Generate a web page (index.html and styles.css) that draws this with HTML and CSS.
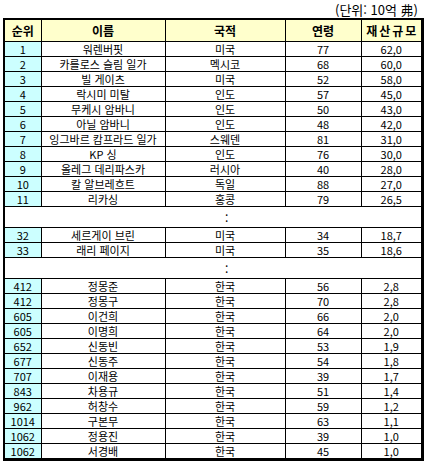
FILE: index.html
```html
<!DOCTYPE html>
<html lang="ko">
<head>
<meta charset="utf-8">
<link rel="stylesheet" href="styles.css">
</head>
<body>
<div class="unit">(단위: 10억 弗)</div>
<div class="frame">
<table class="rich">
<colgroup>
<col class="c1"><col class="c2"><col class="c3"><col class="c4"><col class="c5">
</colgroup>
<thead>
<tr class="head"><th>순위</th><th>이름</th><th>국적</th><th>연령</th><th class="wide">재산규모</th></tr>
</thead>
<tbody>
<tr class="row"><td class="rank">1</td><td>워렌버핏</td><td>미국</td><td>77</td><td>62,0</td></tr>
<tr class="row"><td class="rank">2</td><td>카를로스 슬림 일가</td><td>멕시코</td><td>68</td><td>60,0</td></tr>
<tr class="row"><td class="rank">3</td><td>빌 게이츠</td><td>미국</td><td>52</td><td>58,0</td></tr>
<tr class="row"><td class="rank">4</td><td>락시미 미탈</td><td>인도</td><td>57</td><td>45,0</td></tr>
<tr class="row"><td class="rank">5</td><td>무케시 암바니</td><td>인도</td><td>50</td><td>43,0</td></tr>
<tr class="row"><td class="rank">6</td><td>아닐 암바니</td><td>인도</td><td>48</td><td>42,0</td></tr>
<tr class="row"><td class="rank">7</td><td>잉그바르 캄프라드 일가</td><td>스웨덴</td><td>81</td><td>31,0</td></tr>
<tr class="row"><td class="rank">8</td><td>KP 싱</td><td>인도</td><td>76</td><td>30,0</td></tr>
<tr class="row"><td class="rank">9</td><td>올레그 데리파스카</td><td>러시아</td><td>40</td><td>28,0</td></tr>
<tr class="row"><td class="rank">10</td><td>칼 알브레흐트</td><td>독일</td><td>88</td><td>27,0</td></tr>
<tr class="row"><td class="rank">11</td><td>리카싱</td><td>홍콩</td><td>79</td><td>26,5</td></tr>
<tr class="gap"><td colspan="5">:</td></tr>
<tr class="row"><td class="rank">32</td><td>세르게이 브린</td><td>미국</td><td>34</td><td>18,7</td></tr>
<tr class="row"><td class="rank">33</td><td>래리 페이지</td><td>미국</td><td>35</td><td>18,6</td></tr>
<tr class="gap"><td colspan="5">:</td></tr>
<tr class="row"><td class="rank">412</td><td>정몽준</td><td>한국</td><td>56</td><td>2,8</td></tr>
<tr class="row"><td class="rank">412</td><td>정몽구</td><td>한국</td><td>70</td><td>2,8</td></tr>
<tr class="row"><td class="rank">605</td><td>이건희</td><td>한국</td><td>66</td><td>2,0</td></tr>
<tr class="row"><td class="rank">605</td><td>이명희</td><td>한국</td><td>64</td><td>2,0</td></tr>
<tr class="row"><td class="rank">652</td><td>신동빈</td><td>한국</td><td>53</td><td>1,9</td></tr>
<tr class="row"><td class="rank">677</td><td>신동주</td><td>한국</td><td>54</td><td>1,8</td></tr>
<tr class="row"><td class="rank">707</td><td>이재용</td><td>한국</td><td>39</td><td>1,7</td></tr>
<tr class="row"><td class="rank">843</td><td>차용규</td><td>한국</td><td>51</td><td>1,4</td></tr>
<tr class="row"><td class="rank">962</td><td>허창수</td><td>한국</td><td>59</td><td>1,2</td></tr>
<tr class="row"><td class="rank">1014</td><td>구본무</td><td>한국</td><td>63</td><td>1,1</td></tr>
<tr class="row"><td class="rank">1062</td><td>정용진</td><td>한국</td><td>39</td><td>1,0</td></tr>
<tr class="row"><td class="rank">1062</td><td>서경배</td><td>한국</td><td>45</td><td>1,0</td></tr>
</tbody>
</table>
</div>
</body>
</html>
```
FILE: styles.css
```css
html, body {
  margin: 0;
  padding: 0;
  background: #ffffff;
}
body {
  font-family: "Noto Sans CJK KR", "Liberation Sans", sans-serif;
  font-size: 11px;
  color: #000000;
}
.unit {
  height: 18px;
  line-height: 20px;
  text-align: right;
  padding-right: 10px;
  font-size: 13px;
}
.frame {
  margin-left: 3px;
  width: 416px;
  border: 2px solid #000000;
  border-right-width: 3px;
  border-bottom-width: 3px;
}
.rich {
  width: 416px;
  table-layout: fixed;
  border-collapse: collapse;
  border-style: hidden;
}
.c1 { width: 36px; }
.c2 { width: 124px; }
.c3 { width: 120px; }
.c4 { width: 76px; }
.c5 { width: 60px; }
.rich th, .rich td {
  border: 1px solid #000000;
  padding: 0;
  text-align: center;
  white-space: nowrap;
  overflow: hidden;
}
.head th {
  height: 21px;
  background: #ffffcc;
  font-size: 12px;
  font-weight: bold;
}
.head .wide {
  letter-spacing: 2px;
  text-indent: 2px;
}
.row td {
  height: 14px;
  line-height: 14px;
}
.rank {
  background: #ccffff;
}
.gap td {
  height: 20px;
  text-align: left;
  padding-left: 220px;
  font-size: 12px;
}
```
